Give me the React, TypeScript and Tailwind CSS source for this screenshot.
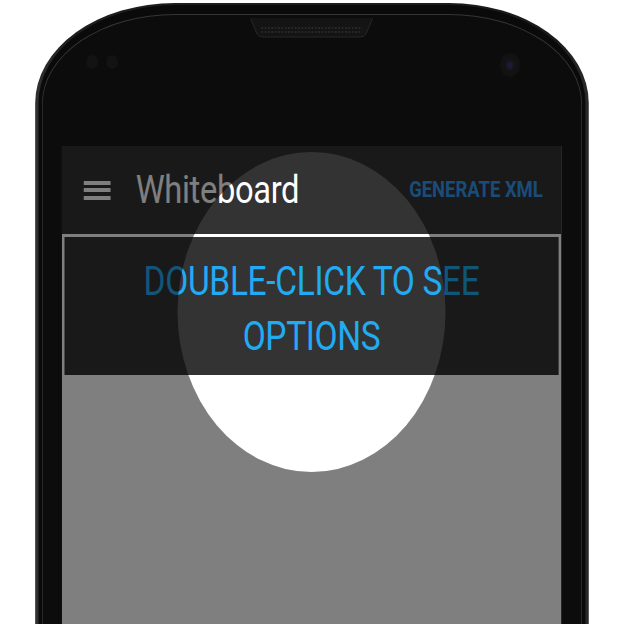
import React from "react";

function Speaker() {
  return (
    <svg width="146" height="22" viewBox="0 0 146 22">
      <defs>
        <pattern id="grille" width="4" height="4" patternUnits="userSpaceOnUse">
          <circle cx="2" cy="2" r="1.1" fill="#2c2c2c" />
        </pattern>
      </defs>
      <path d="M0 0 L146 0 L138 16 Q136 19 131 19 L15 19 Q10 19 8 16 Z" fill="#141414" />
      <path d="M0 0.5 L8 16 Q10 19 15 19 L131 19 Q136 19 138 16 L146 0.5" fill="none" stroke="#2a2a2a" strokeWidth="1" />
      <rect x="12" y="7" width="122" height="10" rx="5" fill="url(#grille)" />
    </svg>
  );
}

export default function App() {
  return (
    <div className="w-[624px] h-[624px] overflow-hidden bg-white">
      <div className="w-[745px] h-[624px] origin-top-left scale-x-[0.8375] pt-[3px] pl-[42px]">
        <div className="w-[661px] h-[720px] rounded-t-[167px_100px] bg-[linear-gradient(90deg,#303030,#1e1e1e_6%,#1a1a1a_94%,#2a2a2a)] pt-[2px] px-[4px]">
          <div className="h-full rounded-t-[163px_98px] bg-[#0a0a0a] pt-[9px] px-[4px]">
            <div className="h-full rounded-t-[159px_90px] border-t border-x border-[#363636] bg-[#0c0c0c] pl-[23px] pr-[24px]">
              <div className="relative h-[131px] flex justify-center">
                <div className="mt-[3px]">
                  <Speaker />
                </div>
                <div className="absolute left-[29px] top-[40px] flex gap-[10px]">
                  <div className="w-[14px] h-[14px] rounded-full bg-[#131313]" />
                  <div className="w-[14px] h-[14px] rounded-full bg-[#131313]" />
                </div>
                <div className="absolute left-[523px] top-[38px] w-[24px] h-[24px] rounded-full bg-[radial-gradient(circle,#1c1c3a_0,#1c1c3a_12%,#141414_30%,#111111_70%,#0c0c0c_100%)]" />
              </div>
              <div className="relative h-[520px] overflow-hidden bg-white font-['Roboto',sans-serif]">
                <div className="h-[88px] bg-[#333333] flex items-center pl-[26px] pr-[22px]">
                  <div className="w-[32px] flex flex-col gap-[3.5px]">
                    <div className="h-[4px] bg-white" />
                    <div className="h-[4px] bg-white" />
                    <div className="h-[4px] bg-white" />
                  </div>
                  <span className="ml-[30px] text-[39px] tracking-[-0.4px] leading-none text-white">Whiteboard</span>
                  <span className="ml-auto text-[22px] font-bold leading-none text-[#3399f0]">GENERATE XML</span>
                </div>
                <div className="border-[3px] border-white bg-[#333333] pt-[17px] pb-[11px] text-center text-[40px] tracking-[-0.4px] leading-[55px] text-[#22aaf2]">
                  DOUBLE-CLICK TO SEE
                  <br />
                  OPTIONS
                </div>
                <div className="absolute inset-0 pointer-events-none">
                  <div className="absolute left-[138px] top-[6px] w-[320px] h-[320px] rounded-full shadow-[0_0_0_1200px_rgba(0,0,0,0.5)]" />
                </div>
              </div>
            </div>
          </div>
        </div>
      </div>
    </div>
  );
}
